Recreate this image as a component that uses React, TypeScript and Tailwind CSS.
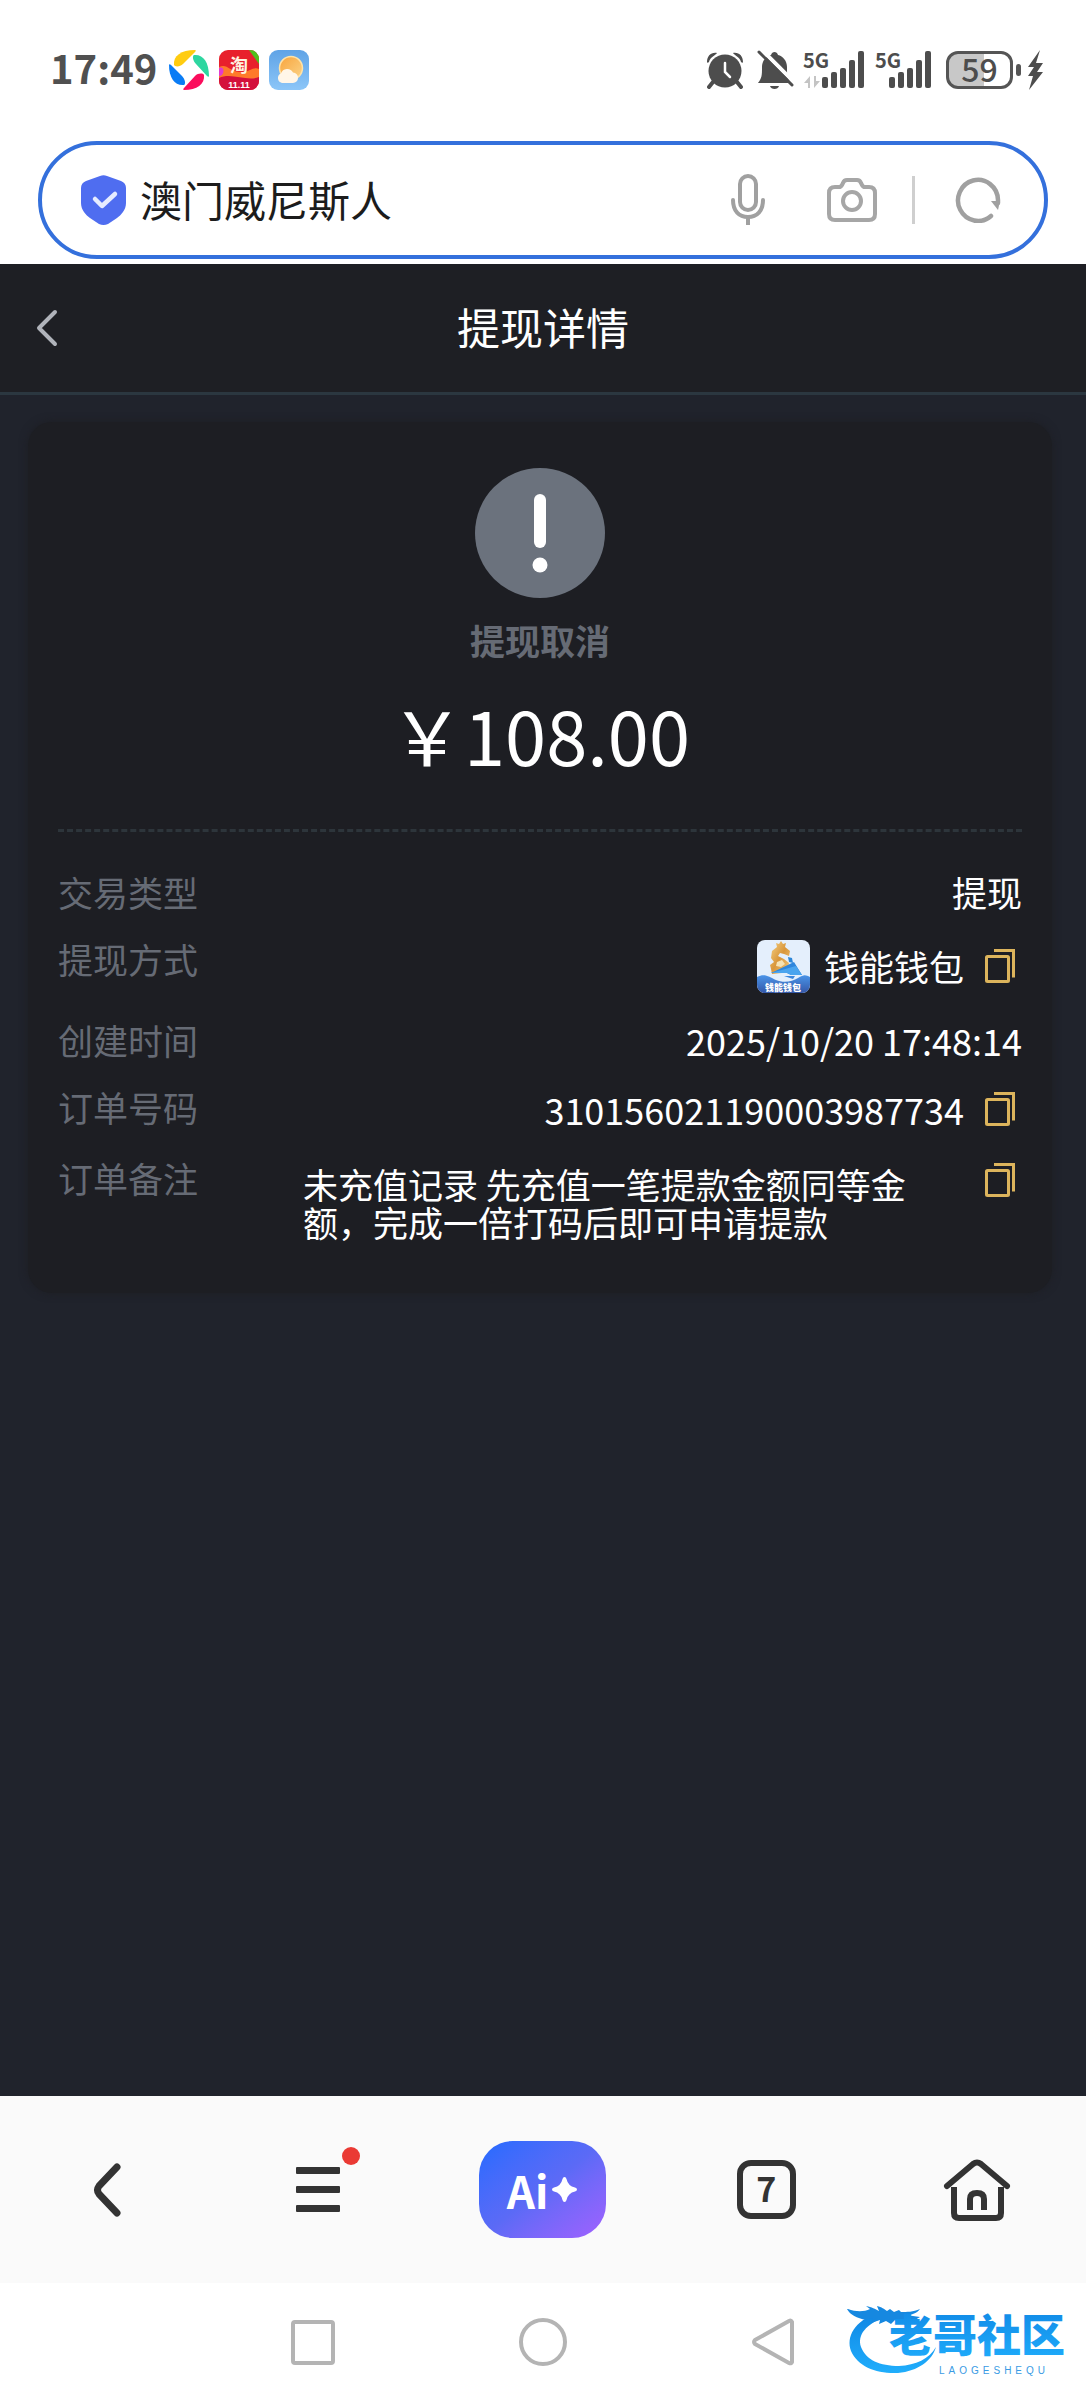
import React, { useState } from "react";

const Signal = () => (
  <svg width="43" height="37" viewBox="0 0 43 37" fill="#4d4d4d">
    <rect x="0" y="26" width="6" height="11" rx="2" />
    <rect x="9" y="21" width="6" height="16" rx="2" />
    <rect x="18" y="17" width="6" height="20" rx="2" />
    <rect x="27" y="9" width="6" height="28" rx="2" />
    <rect x="36" y="0" width="6" height="37" rx="2" />
  </svg>
);

const StatusBar = () => (
  <div className="flex h-[141px] items-center justify-between pr-[42px] pb-[2px] pl-[50px]">
    <div className="flex items-center gap-[10px]">
      <span className="mr-[2px] pb-[6px] text-[40px] leading-[48px] font-bold text-[#505050]">17:49</span>
      <svg width="40" height="40" viewBox="0 0 40 40">
        <path d="M5 15C4 6 12 0 26 0c1 0 1 1 0 2L14 14c-3 3-8 3-9 1z" fill="#ffcc10" />
        <path d="M25 5c9-1 15 7 15 21 0 1-1 1-2 0L27 14c-3-3-4-8-2-9z" fill="#2ed6a0" />
        <path d="M35 25c1 9-7 15-20 15-1 0-1-1 0-2l11-12c3-3 8-3 9-1z" fill="#fb0d5c" />
        <path d="M15 35C6 36 0 28 0 15c0-1 1-1 2 0l11 11c3 3 4 8 2 9z" fill="#0a7cf5" />
      </svg>
      <svg width="40" height="40" viewBox="0 0 40 40">
        <clipPath id="shop">
          <rect width="40" height="40" rx="9" />
        </clipPath>
        <g clipPath="url(#shop)">
          <rect width="40" height="40" fill="#e8202c" />
          <path d="M30 0h10v14z" fill="#4fc01c" />
          <path d="M0 17c8-4 10 4 20 5s14-6 20-3v14H0z" fill="#ff7a2a" />
          <path d="M0 18c6-3 6 8 0 8z" fill="#e23ad0" />
          <path d="M0 28c12-6 28 4 40-1v13H0z" fill="#d4103c" />
          <text x="20" y="22" textAnchor="middle" fontSize="18" fontWeight="700" fill="#fff4e2">淘</text>
          <text x="20" y="38" textAnchor="middle" fontFamily="Liberation Sans, sans-serif" fontSize="9" fontWeight="700" fill="#fff">11.11</text>
        </g>
      </svg>
      <svg width="40" height="40" viewBox="0 0 40 40">
        <linearGradient id="sky" x1="0" y1="0" x2="0" y2="1">
          <stop offset="0" stopColor="#5fa3e6" />
          <stop offset="1" stopColor="#8cc6f8" />
        </linearGradient>
        <linearGradient id="sun" x1="0" y1="0" x2="1" y2="1">
          <stop offset="0" stopColor="#f8a43c" />
          <stop offset="1" stopColor="#fbd488" />
        </linearGradient>
        <rect width="40" height="40" rx="9" fill="url(#sky)" />
        <circle cx="22" cy="18" r="11.500" fill="url(#sun)" stroke="#ffe3a8" strokeWidth="1.500" />
        <path d="M13 33a5 5 0 0 1-1-9.500 6.500 6.500 0 0 1 12-1 5 5 0 0 1 5 5.500 5 5 0 0 1-5 5z" fill="#fff6e8" />
      </svg>
    </div>
    <div className="flex items-center">
      <svg width="38" height="38" viewBox="0 0 38 38" fill="#4d4d4d">
        <path d="M1 11C1 5 5 1 11 2c-1 2-7 4-8 9-1 1-2 1-2 0zM37 11c0-6-4-10-10-9 1 2 7 4 8 9 1 1 2 1 2 0z" />
        <path d="M7 31l-4 5M31 31l4 5" stroke="#4d4d4d" strokeWidth="4" strokeLinecap="round" />
        <circle cx="19" cy="20" r="16.500" />
        <path d="M19 12v9l5 5" fill="none" stroke="#fff" strokeWidth="2.500" strokeLinecap="round" />
      </svg>
      <svg className="ml-3" width="38" height="40" viewBox="0 0 38 40">
        <path d="M2 33c4-5 4-8 4-16 0-6 4-11 9-12 1-4 6-4 7 0 5 1 9 6 9 12 0 8 0 11 4 16z" fill="#4d4d4d" />
        <path d="M14 36h9c-1 4-8 4-9 0z" fill="#4d4d4d" />
        <path d="M5 -1l33 33" stroke="#fff" strokeWidth="4" />
        <path d="M3 2l33 33" stroke="#4d4d4d" strokeWidth="3" strokeLinecap="round" />
      </svg>
      <div className="relative ml-7">
        <span className="absolute -top-[3px] -left-[19px] text-[20px] leading-6 font-bold text-[#4d4d4d]">5G</span>
        <svg className="absolute bottom-0 -left-[18px]" width="16" height="12" viewBox="0 0 16 12" fill="#c4c4c4">
          <path d="M0 7l6-7v12H4V7zM16 5l-6 7V0h2v5z" />
        </svg>
        <Signal />
      </div>
      <div className="relative ml-6">
        <span className="absolute -top-[3px] -left-[14px] text-[20px] leading-6 font-bold text-[#4d4d4d]">5G</span>
        <Signal />
      </div>
      <div className="ml-[14px] flex items-center">
        <div className="flex h-[38px] w-[67px] items-center justify-center rounded-xl border-[3px] border-[#555] bg-linear-to-r from-[#c8c8c8] from-58% to-white to-58% pb-1">
          <span className="text-[32px] leading-8 font-medium text-[#4d4d4d]">59</span>
        </div>
        <span className="ml-[3px] h-3 w-[5px] rounded-sm bg-[#555]" />
      </div>
      <svg className="ml-[6px]" width="17" height="40" viewBox="0 0 17 40" fill="#4d4d4d">
        <path d="M13 0L1 17h6L1 26h5L2 40 16 22h-6l6-9h-7z" />
      </svg>
    </div>
  </div>
);

const SearchBar = () => {
  const [query, setQuery] = useState("澳门威尼斯人");

  return (
    <form className="mx-[38px] mb-[5px] flex h-[118px] items-center rounded-full border-4 border-[#3470dc] pr-[43px] pl-[39px]">
      <svg className="shrink-0" width="45" height="50" viewBox="0 0 45 50">
        <path d="M19 1q3.500-1.500 7 0l14 5q5 2 5 7v15c0 7-5 12-9 15l-9 6q-4.500 2-9 0l-9-6c-4-3-9-8-9-15V13q0-5 5-7z" fill="#4f6df0" />
        <path d="M14 24l7 7 13-12" fill="none" stroke="#e6ecff" strokeWidth="4.500" strokeLinecap="round" strokeLinejoin="round" />
      </svg>
      <input
        aria-label="搜索"
        className="ml-[14px] min-w-0 flex-1 pb-[2px] text-[42px] leading-[60px] text-[#1c1c1c] outline-none"
        value={query}
        onChange={(e) => setQuery(e.target.value)}
      />
      <button type="button" aria-label="语音" className="mr-[62px]">
        <svg width="34" height="52" viewBox="0 0 34 52" fill="none" stroke="#a0a0a0" strokeWidth="4">
          <rect x="9" y="2" width="16" height="34" rx="8" />
          <path d="M2 26c0 11 6 17 15 17s15-6 15-17" strokeLinecap="round" />
          <path d="M17 43v8" />
        </svg>
      </button>
      <button type="button" aria-label="拍照" className="mr-[35px]">
        <svg width="50" height="44" viewBox="0 0 50 44" fill="none" stroke="#a6a6a6" strokeWidth="4" strokeLinejoin="round">
          <path d="M8 9h4q2 0 3-2l1-2q1-3 4-3h10q3 0 4 3l1 2q1 2 3 2h4q6 0 6 6v21q0 6-6 6H8q-6 0-6-6V15q0-6 6-6z" />
          <circle cx="25" cy="23" r="9" />
        </svg>
      </button>
      <span className="mr-10 h-12 w-[3px] bg-[#cfcfcf]" />
      <button type="button" aria-label="刷新">
        <svg width="46" height="46" viewBox="0 0 46 46">
          <path d="M36 39A20 20.500 0 1 1 43 23v3" fill="none" stroke="#a0a0a0" strokeWidth="4.500" strokeLinecap="round" />
          <path d="M36 24h9l-2 9z" fill="#a0a0a0" />
        </svg>
      </button>
    </form>
  );
};

const WalletLogo = () => (
  <svg width="53" height="53" viewBox="0 0 53 53">
    <linearGradient id="gold" x1="0" y1="0" x2="1" y2="1">
      <stop offset="0" stopColor="#f6d58a" />
      <stop offset="0.500" stopColor="#d9963a" />
      <stop offset="1" stopColor="#f3cf86" />
    </linearGradient>
    <linearGradient id="sea" x1="0" y1="0" x2="0" y2="1">
      <stop offset="0" stopColor="#4a94e8" />
      <stop offset="1" stopColor="#3457a8" />
    </linearGradient>
    <clipPath id="wallet">
      <rect width="53" height="53" rx="8" />
    </clipPath>
    <g clipPath="url(#wallet)">
      <rect width="53" height="53" fill="#e4effc" />
      <path d="M14 29l-1-4 4-3-3-4 1-7 5-4-1-4 3 1 2-3 2 3 3-1-1 4 5 4-1 5-5-2-4-1-2 3 6 3 5 4-1 5-6 5-10 1z" fill="url(#gold)" />
      <path d="M20 22l5-2 3 4-4 3-5-1z" fill="#f5e2b4" />
      <path d="M31 17l4 1 1 5-4-1z" fill="#2c86d8" />
      <path d="M14 33l23-11 8 13H34l-4-2z" fill="#2f86dc" />
      <path d="M14 33l25-7 6 9H34l-4-2z" fill="#4aa4ee" />
      <path d="M27 36h11l-2 3z" fill="#3b86dc" />
      <path d="M0 37c8-4 12 0 19 3s16 2 22-2 8-3 12-1v16H0z" fill="url(#sea)" />
      <text x="26" y="51" textAnchor="middle" fontSize="9" fontWeight="900" fill="#fff">钱能钱包</text>
    </g>
  </svg>
);

const CopyButton = () => (
  <button aria-label="复制" className="ml-[14px] flex h-14 w-11 shrink-0 items-center justify-center">
    <svg width="30" height="34" viewBox="0 0 30 34" fill="none" stroke="#dcb45c" strokeWidth="3">
      <rect x="1.500" y="7.500" width="22" height="25" rx="1" />
      <path d="M9 1.500h19.500v27" />
    </svg>
  </button>
);

const Row = ({ label, children }: { label: string; children: React.ReactNode }) => (
  <div className="flex items-start justify-between">
    <dt className="shrink-0 leading-[52px] text-[#666b75]">{label}</dt>
    {children}
  </div>
);

const Details = () => (
  <section className="mt-[27px] mr-[34px] ml-7 rounded-3xl bg-[#1d1e23] px-[30px] pt-[46px] pb-[52px] shadow-[0_0_8px_#1d1e23]">
    <div className="flex flex-col items-center">
      <svg width="130" height="130" viewBox="0 0 130 130">
        <circle cx="65" cy="65" r="65" fill="#6b727d" />
        <rect x="59" y="26" width="12" height="54" rx="6" fill="#fff" />
        <circle cx="65" cy="97" r="7.500" fill="#fff" />
      </svg>
      <p className="mt-4 text-[35px] leading-[52px] font-bold text-[#666b75]">提现取消</p>
      <p className="mt-7 text-[74px] leading-[80px] text-white">￥108.00</p>
    </div>
    <dl className="mt-[55px] flex flex-col gap-[15px] border-t-[3px] border-dashed border-[#2d353b] pt-[34px] text-[35px] text-white">
      <Row label="交易类型">
        <dd className="leading-[52px]">提现</dd>
      </Row>
      <Row label="提现方式">
        <dd className="flex h-[66px] items-center">
          <WalletLogo />
          <span className="ml-[14px] leading-[52px]">钱能钱包</span>
          <CopyButton />
        </dd>
      </Row>
      <Row label="创建时间">
        <dd className="text-[36px] leading-[52px]">2025/10/20 17:48:14</dd>
      </Row>
      <Row label="订单号码">
        <dd className="flex items-center">
          <span className="text-[36px] leading-[52px]">310156021190003987734</span>
          <CopyButton />
        </dd>
      </Row>
      <Row label="订单备注">
        <dd className="ml-[105px] flex flex-1 items-start">
          <span className="flex-1 pt-[13px] leading-[38px]">未充值记录 先充值一笔提款金额同等金额，完成一倍打码后即可申请提款</span>
          <CopyButton />
        </dd>
      </Row>
    </dl>
  </section>
);

const Toolbar = () => (
  <nav className="flex h-[187px] items-center justify-between bg-[#fafafa] pr-[59px] pl-[57px]">
    <button aria-label="后退" className="flex w-[100px] justify-center">
      <svg width="28" height="54" viewBox="0 0 28 54" fill="none" stroke="#333" strokeWidth="7" strokeLinecap="round" strokeLinejoin="round">
        <path d="M24 4L6 23q-3 4 0 8l18 19" />
      </svg>
    </button>
    <button aria-label="菜单" className="relative flex w-[100px] justify-center">
      <svg width="44" height="45" viewBox="0 0 44 45" fill="#333">
        <rect width="44" height="7" rx="1" />
        <rect y="19" width="44" height="7" rx="1" />
        <rect y="38" width="44" height="7" rx="1" />
      </svg>
      <span className="absolute -top-5 right-2 size-[18px] rounded-full bg-[#ea3a34]" />
    </button>
    <button className="flex h-[97px] w-[127px] items-center justify-center rounded-[34px] bg-linear-to-br from-[#1f6bff] via-[#5b6af6] to-[#a060ff] text-white">
      <span className="text-[44px] leading-[48px] font-bold">Ai</span>
      <svg className="ml-1" width="25" height="25" viewBox="0 0 25 25" fill="currentColor">
        <path d="M12.500 0q1.500 0 2 2 1.500 7 8.500 8.500 2 .5 2 2t-2 2Q16 16 14.500 23q-.5 2-2 2t-2-2Q9 16 2 14.500q-2-.5-2-2t2-2Q9 9 10.500 2q.5-2 2-2z" />
      </svg>
    </button>
    <button aria-label="标签页" className="flex w-[100px] justify-center">
      <span className="flex size-[59px] items-center justify-center rounded-[14px] border-[6px] border-[#333] pb-[3px] text-[34px] leading-10 font-bold text-[#333]">7</span>
    </button>
    <button aria-label="主页" className="flex w-[100px] justify-center">
      <svg width="68" height="62" viewBox="0 0 68 62" fill="none" stroke="#333" strokeWidth="6">
        <path d="M4 27L30 5q4-3 8 0l26 22" strokeLinecap="round" />
        <path d="M11 28v26q0 5 5 5h37q5 0 5-5V28" />
        <path d="M27 51V40q0-6 7-6t7 6v11" />
      </svg>
    </button>
  </nav>
);

const CommunityLogo = () => (
  <svg className="absolute top-2 right-[6px]" width="240" height="100" viewBox="0 0 240 100">
    <linearGradient id="dragon" x1="0" y1="0" x2="0" y2="1">
      <stop offset="0" stopColor="#0f86e4" />
      <stop offset="1" stopColor="#20aefc" />
    </linearGradient>
    <path d="M38 22C14 30 6 46 11 60c7 16 26 23 47 22 20-2 34-12 38-26-7 12-20 18-37 19-19 0-33-6-38-19-4-12 5-23 24-30z" fill="url(#dragon)" />
    <path d="M8 18c8 3 16 3 22 0l-4-3c6 1 9 3 13 5l-2-5c5 1 7 3 10 5l3-2 4 3 5-2 2 2c6 0 12 0 19-3-3 4-8 6-14 6l14 2-5 3c-5-1-9-1-13 0l-3 3-4-3-4 4-5-3-7 3 1-4-9 3 2-5-7 2c-9-2-16-5-19-11z" fill="#1688e0" />
    <text x="49" y="61" fontSize="44" fontWeight="900" fill="url(#dragon)">老哥社区</text>
    <text x="99" y="83" fontFamily="Liberation Sans, sans-serif" fontSize="10" fill="#3a9be4" letterSpacing="4">LAOGESHEQU</text>
  </svg>
);

const SystemNav = () => (
  <nav className="relative flex h-[117px] items-center justify-center gap-[182px]">
    <button aria-label="最近任务">
      <svg width="48" height="48" viewBox="0 0 48 48" fill="none" stroke="#b4b4b4" strokeWidth="4">
        <rect x="4" y="4" width="40" height="41" rx="2" />
      </svg>
    </button>
    <button aria-label="桌面">
      <svg width="48" height="48" viewBox="0 0 48 48" fill="none" stroke="#b4b4b4" strokeWidth="4">
        <circle cx="24" cy="24" r="22" />
      </svg>
    </button>
    <button aria-label="返回">
      <svg width="48" height="48" viewBox="0 0 48 48" fill="none" stroke="#b4b4b4" strokeWidth="4" strokeLinejoin="round">
        <path d="M43 4v40q-1 2-3 1L6 26q-2-2 0-4L40 3q2-1 3 1z" />
      </svg>
    </button>
    <CommunityLogo />
  </nav>
);

const App = () => {
  return (
    <div className="flex min-h-screen flex-col bg-white font-['Noto_Sans_CJK_SC',sans-serif]">
      <StatusBar />
      <SearchBar />
      <main className="flex-1 bg-[#20232c]">
        <header className="relative flex h-[131px] items-center justify-center border-b-[3px] border-[#2b3740] bg-[#1e1f24]">
          <button aria-label="返回" className="absolute left-9">
            <svg width="22" height="38" viewBox="0 0 22 38" fill="none" stroke="#b0b3ba" strokeWidth="4" strokeLinecap="round" strokeLinejoin="round">
              <path d="M19 3L3 19l16 16" />
            </svg>
          </button>
          <h1 className="pb-1 text-[43px] leading-[60px] text-white">提现详情</h1>
        </header>
        <Details />
      </main>
      <Toolbar />
      <SystemNav />
    </div>
  );
};

export default App;
